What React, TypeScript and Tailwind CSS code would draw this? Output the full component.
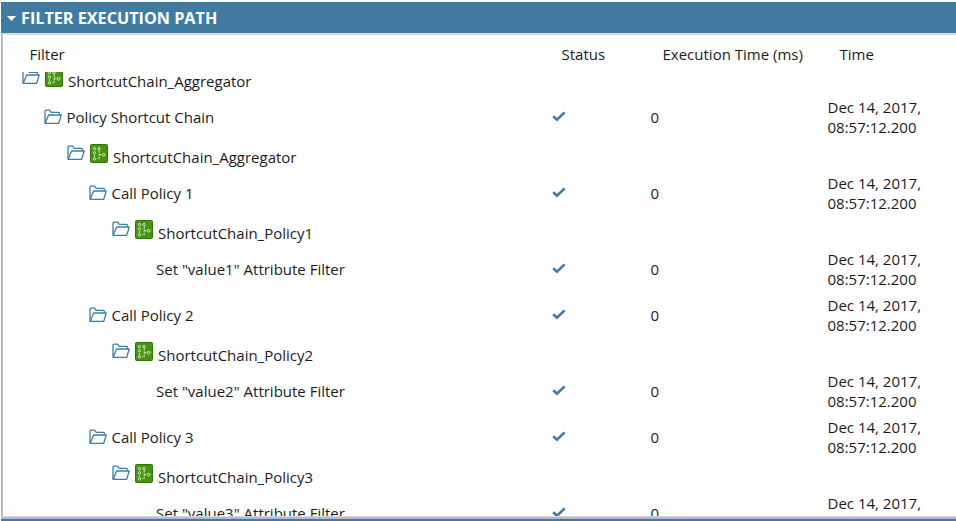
type Row = { level: number; label: string; kind: "policy" | "call" | "leaf" };

const rows: Row[] = [
  { level: 0, label: "ShortcutChain_Aggregator", kind: "policy" },
  { level: 1, label: "Policy Shortcut Chain", kind: "call" },
  { level: 2, label: "ShortcutChain_Aggregator", kind: "policy" },
  { level: 3, label: "Call Policy 1", kind: "call" },
  { level: 4, label: "ShortcutChain_Policy1", kind: "policy" },
  { level: 5, label: 'Set "value1" Attribute Filter', kind: "leaf" },
  { level: 3, label: "Call Policy 2", kind: "call" },
  { level: 4, label: "ShortcutChain_Policy2", kind: "policy" },
  { level: 5, label: 'Set "value2" Attribute Filter', kind: "leaf" },
  { level: 3, label: "Call Policy 3", kind: "call" },
  { level: 4, label: "ShortcutChain_Policy3", kind: "policy" },
  { level: 5, label: 'Set "value3" Attribute Filter', kind: "leaf" },
];

const indents = ["pl-[20px]", "pl-[42px]", "pl-[65px]", "pl-[87px]", "pl-[110px]", "pl-[154px]"];

function Folder() {
  return (
    <svg className="h-4 w-[18px] shrink-0" viewBox="0 0 18 16" fill="none" stroke="#3f7ca4" strokeWidth="1.3" strokeLinejoin="round">
      <path d="M1 14V2.2Q1 1.2 2 1.2H5.6L7.2 3.3H14.4Q15.4 3.3 15.4 4.3V5.8" />
      <path d="M1.1 14.4L4.6 6H17.2L14.7 14.4Z" />
    </svg>
  );
}

function Circuit() {
  return (
    <svg className="h-[19px] w-[18px] shrink-0" viewBox="0 0 18 19" fill="none">
      <rect x="0.5" y="0.5" width="17" height="18" rx="1" fill="#469410" stroke="#347408" />
      <g stroke="#d5e8c4" strokeWidth="1">
        <circle cx="4.5" cy="4.6" r="1.2" />
        <circle cx="9" cy="4.6" r="1.2" />
        <circle cx="4.5" cy="8.8" r="1.2" />
        <circle cx="13.6" cy="10.7" r="1.4" />
        <circle cx="4.5" cy="14.8" r="1.2" />
        <path d="M9.2 6V14.7H7.2M9.2 10.7H11.4M4.5 11V13" strokeDasharray="2.6 .7" />
      </g>
    </svg>
  );
}

function Check() {
  return (
    <svg className="mb-[2px] h-[11px] w-[14px]" viewBox="0 0 14 11" fill="none" stroke="#3f7ca4" strokeWidth="2.6">
      <path d="M1.2 5.2L5 8.8L12.6 1.4" />
    </svg>
  );
}

function TreeRow({ row }: { row: Row }) {
  if (row.kind === "policy") {
    return (
      <div className={`flex h-[30px] shrink-0 ${indents[row.level]}`}>
        <div className="pt-[5px]"><Folder /></div>
        <div className="ml-[5px] pt-1"><Circuit /></div>
        <span className="ml-[5px] pt-[7px] whitespace-nowrap">{row.label}</span>
      </div>
    );
  }
  return (
    <div className="grid h-[46px] shrink-0 grid-cols-[549.5px_99px_177px_1fr] items-center">
      <div className={`flex items-center whitespace-nowrap ${indents[row.level]}`}>
        {row.kind === "call" && <span className="mr-[4.5px]"><Folder /></span>}
        <span>{row.label}</span>
      </div>
      <Check />
      <span>0</span>
      <span>Dec 14, 2017,<br />08:57:12.200</span>
    </div>
  );
}

export default function App() {
  return (
    <div className="flex h-[521px] w-[956px] flex-col overflow-hidden bg-white pt-[2px] pl-px font-['Open_Sans',sans-serif] text-[15px] leading-5 text-[#1c1c1c]">
      <header className="flex h-[31px] shrink-0 items-center bg-[#407ca1] pl-[6px] text-[16.2px] font-bold text-white">
        <svg className="mt-[2px] mr-[5px] h-[5px] w-[9px]" viewBox="0 0 9 5"><path d="M0 0H9L4.5 5Z" fill="white" /></svg>
        FILTER EXECUTION PATH
      </header>
      <section className="flex h-[483px] shrink-0 flex-col border-t-2 border-l-2 border-t-[#d7d9dd] border-l-[#b7bbc6]">
        <div className="grid h-[37px] shrink-0 grid-cols-[532px_101px_177px_1fr] pt-[9px] pl-[26.5px]">
          <span>Filter</span>
          <span>Status</span>
          <span>Execution Time (ms)</span>
          <span>Time</span>
        </div>
        <div className="-ml-px flex min-h-0 flex-1 flex-col overflow-hidden">
          <div className="-mt-2 flex flex-col">
            {rows.map((row, index) => <TreeRow key={index} row={row} />)}
          </div>
        </div>
      </section>
      <div className="h-[3px] shrink-0 border-t border-[#d7d9dd] bg-[#b7bbc6]" />
      <div className="h-[2px] shrink-0 bg-[#407ca1]" />
    </div>
  );
}
